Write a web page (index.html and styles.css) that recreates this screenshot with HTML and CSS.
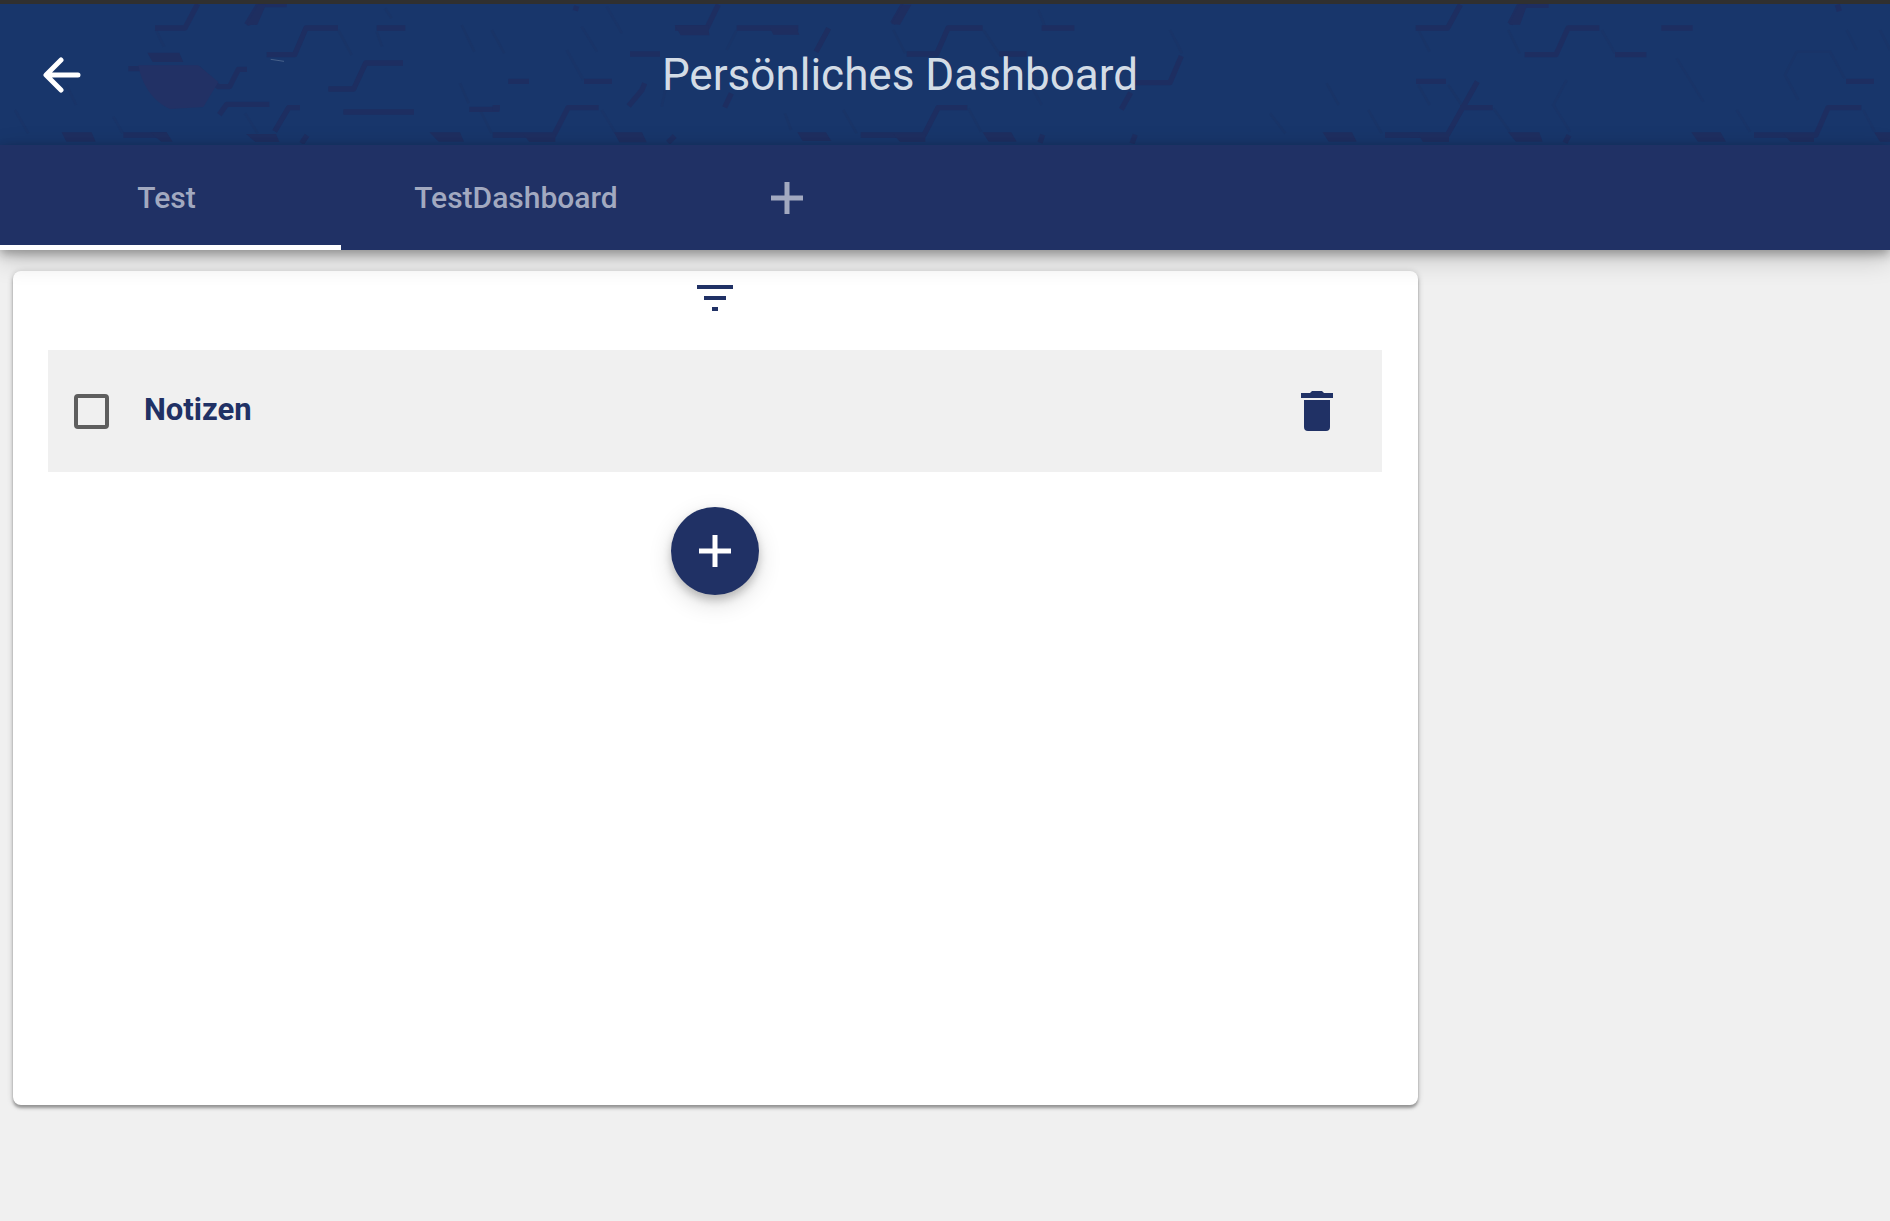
FILE: index.html
```
<!DOCTYPE html>
<html lang="de">
<head>
	<meta charset="utf-8">
	<title>Persönliches Dashboard</title>
	<link rel="stylesheet" href="styles.css">
</head>
<body>
	<header class="toolbar">
		<!-- honeycomb background -->
		<svg class="toolbar-pattern" viewBox="0 12 5670 420" preserveAspectRatio="xMinYMin slice" aria-hidden="true">
			<g class="soft">
				<path d="M468 90l24 50M1015 90l40 75M1130 95l16 45M1155 25l20 30M1385 75l38 80M200 255l28 60M45 330l40 70M340 350l28 50M735 340l38 60M1380 250l26 60"/>
				<path d="M1475 90l38 70M1745 80l46 75M1820 20l46 80M1700 150l50 90M1440 330l35 70M1805 330l42 70M2210 90l-30 60M2680 90l36 70M2530 330l40 70M2000 250l-15 70M2355 340l18 50"/>
				<path d="M2950 90l50 75M3115 30l20 50M3510 90l36 70M2905 325l38 70M3095 260l30 55M3980 250l36 65M3810 340l46 60M4105 330l40 70"/>
				<path d="M4255 90l34 65M4525 90l34 70M4805 90l40 70M4255 255l34 60M4345 255l40 60M4480 325l50 70M4700 240l-40 75l50 80M5030 175l80 130M5210 330l40 65M5390 155h100l44 80M5390 155l-35 70l40 75M5540 90l30 60M5640 90l30 60M5590 330l34 65"/>
			</g>
			<g class="edge">
				<path d="M465 84h90l38-72M740 74l36-60h84M800 164h84l34-80h96M1130 84h86M385 206h210l60 54h34l26-52h26M985 267h76l36-78h112M1030 336h212M658 344l22-31h128M824 394l42-71h34M370 405h130M1408 328h90M905 430l16-24"/>
				<path d="M1478 323h22M1525 244h62M1752 244h84M1890 162h90M1730 18l-4 14M2025 84h96l34-70M2210 84h185M2448 155l38-70M1934 250l-8 20-40 48M2174 322l20-42M1478 405h184l42-82h92M2004 428l20-20M2678 70l32-56M2720 162h90l34-78h104M2582 405h190l42-82h88"/>
				<path d="M3125 84h98M2998 162h82M3394 248h116l34-80M3364 328l28-50M3120 428l8-24M3396 430l10-26M4155 405h105"/>
				<path d="M4247 84h96l38-70M4530 72l28-56h88M4574 164h94l36-80h94M4845 164h94M4984 84h94M4248 244h90M4230 405h112l90-160M4380 323h98M4695 428l12-22M5262 405h186l36-82h100M5538 244h84M5512 14l6 20"/>
			</g>
			<g class="face">
				<path d="M442 158h96l12 28h-92zM185 397h90l12 28h-88zM450 397h50l18 28h-34zM738 402h90l10 24h-72zM1288 397h92l12 28h-76z"/>
				<path d="M2024 76h100l4 30h-86zM2310 84h80l8 20h-78zM1570 402h96v24h-78zM1842 397h84l14 30h-82zM2392 397h86l16 26h-86zM2680 402h96v24h-76zM740 76l34-62h24l-26 60zM2674 72l34-58h26l-34 60z"/>
				<path d="M2948 397h86l16 28h-84zM3968 397h88l14 28h-84zM4255 402h92v24h-78zM4524 397h94l10 28h-80zM4528 74l30-60h24l-22 60zM5074 397h88l16 28h-84zM5350 402h92v24h-70zM5622 397h48v28h-30z"/>
				<path class="spot" d="M415 196h180l60 50-45 75-100 6c-50-22-84-70-95-131z"/>
			</g>
			<path class="glint" d="M812 178l40 6"/>
		</svg>
		<button type="button" class="icon-button back" aria-label="Zurück">
			<svg viewBox="0 0 38 38"><path d="M35 19H4M18 4L3 19l15 15"/></svg>
		</button>
		<h1 class="title">Persönliches Dashboard</h1>
	</header>

	<nav class="tabs" aria-label="Dashboards">
		<a class="tab active" href="#test" aria-current="page">Test</a>
		<a class="tab" href="#testdashboard">TestDashboard</a>
		<button type="button" class="icon-button tab-add" aria-label="Dashboard hinzufügen">
			<svg class="plus" viewBox="0 0 34 34"><path d="M17 1v32M1 17h32"/></svg>
		</button>
	</nav>

	<main class="content">
		<section class="card">
			<button type="button" class="icon-button filter" aria-label="Filtern">
				<svg viewBox="0 0 40 28"><path d="M2 3h36M9 14h22M17 25h6"/></svg>
			</button>
			<ul class="notes">
				<li class="note">
					<input type="checkbox" id="note-1" class="note-check">
					<label for="note-1" class="note-label">Notizen</label>
					<button type="button" class="icon-button delete" aria-label="Löschen">
						<svg viewBox="0 0 32 40"><path d="M11 0h10l2 2h9v5H0V2h9zM3 9h26v27q0 4-4 4H7q-4 0-4-4z"/></svg>
					</button>
				</li>
			</ul>
			<button type="button" class="icon-button fab" aria-label="Notiz hinzufügen">
				<svg class="plus" viewBox="0 0 34 34"><path d="M17 1v32M1 17h32"/></svg>
			</button>
		</section>
	</main>
</body>
</html>
```

FILE: styles.css
```
* {
	box-sizing: border-box;
}

body {
	margin: 0;
	min-height: 100vh;
	background-color: #f0f0f0;
	font-family: Roboto, "Liberation Sans", sans-serif;
	font-size: 30px;
	color: #203165;
}

.icon-button {
	display: flex;
	justify-content: center;
	align-items: center;
	padding: 0;
	border: none;
	background: none;
	color: inherit;
	cursor: pointer;
}

.icon-button svg {
	display: block;
	fill: none;
	stroke: currentColor;
}

.icon-button .plus {
	width: 34px;
	height: 34px;
	stroke-width: 5;
}

/* header */
.toolbar {
	position: relative;
	display: flex;
	align-items: center;
	height: 145px;
	padding-right: 214px;
	border-top: 4px solid #303030;
	background-color: #18366b;
	color: white;
}

.toolbar-pattern {
	position: absolute;
	top: 0;
	left: 0;
	width: 100%;
	height: 140px;
	fill: none;
}

.soft {
	stroke: #1b3263;
	stroke-width: 8;
	opacity: 0.4;
}

.edge {
	stroke: #1e2e60;
	stroke-width: 16;
	stroke-linejoin: round;
	opacity: 0.9;
}

.face {
	fill: #1e2e60;
}

.spot {
	fill: #223165;
}

.glint {
	stroke: #47618a;
	stroke-width: 3;
}

.back {
	position: relative;
	width: 124px;
	height: 100px;
}

.back svg {
	width: 38px;
	height: 38px;
	stroke-width: 5;
	stroke-linecap: round;
	stroke-linejoin: round;
}

.title {
	position: relative;
	flex: 1;
	margin: 0;
	font-size: 44px;
	font-weight: 400;
	line-height: 56px;
	text-align: center;
	color: #d3dce6;
}

/* tabs */
.tabs {
	position: relative;
	z-index: 1;
	display: flex;
	height: 105px;
	background-color: #203165;
	box-shadow: 0 4px 10px rgba(0, 0, 0, 0.3), 0 8px 26px rgba(0, 0, 0, 0.2);
	color: #a2a9c0;
}

.tab {
	display: flex;
	justify-content: center;
	align-items: center;
	width: 350px;
	padding-top: 4px;
	border-bottom: 5px solid transparent;
	color: inherit;
	font-weight: 500;
	text-decoration: none;
}

.tab.active {
	width: 341px;
	padding-right: 8px;
	border-bottom-color: white;
}

.tab-add {
	width: 192px;
}

/* card */
.content {
	padding: 21px 13px;
}

.card {
	display: flex;
	flex-direction: column;
	width: 75.4%;
	min-height: 834px;
	padding: 10px 36px 10px 35px;
	border-radius: 8px;
	background-color: white;
	box-shadow: 0 3px 3px rgba(0, 0, 0, 0.3), 0 1px 6px rgba(0, 0, 0, 0.2);
}

.filter {
	align-self: center;
	width: 60px;
	height: 34px;
}

.filter svg {
	width: 40px;
	height: 28px;
	stroke-width: 4;
}

.notes {
	margin: 35px 0;
	padding: 0;
	list-style: none;
}

.note {
	display: flex;
	align-items: center;
	height: 122px;
	padding: 0 26px;
	background-color: #f0f0f0;
}

.note-check {
	appearance: none;
	width: 35px;
	height: 35px;
	margin: 0 35px 0 0;
	border: 4px solid #5e5e5e;
	border-radius: 4px;
}

.note-check:checked {
	background-color: #203165;
}

.note-label {
	flex: 1;
	padding-bottom: 4px;
	font-size: 31px;
	font-weight: 700;
}

.delete {
	width: 78px;
	height: 78px;
}

.delete svg {
	width: 32px;
	height: 40px;
	fill: currentColor;
	stroke: none;
}

.fab {
	align-self: center;
	width: 88px;
	height: 88px;
	border-radius: 50%;
	background-color: #203165;
	box-shadow: 0 5px 8px rgba(0, 0, 0, 0.2), 0 8px 24px rgba(0, 0, 0, 0.14);
	color: white;
}
```
